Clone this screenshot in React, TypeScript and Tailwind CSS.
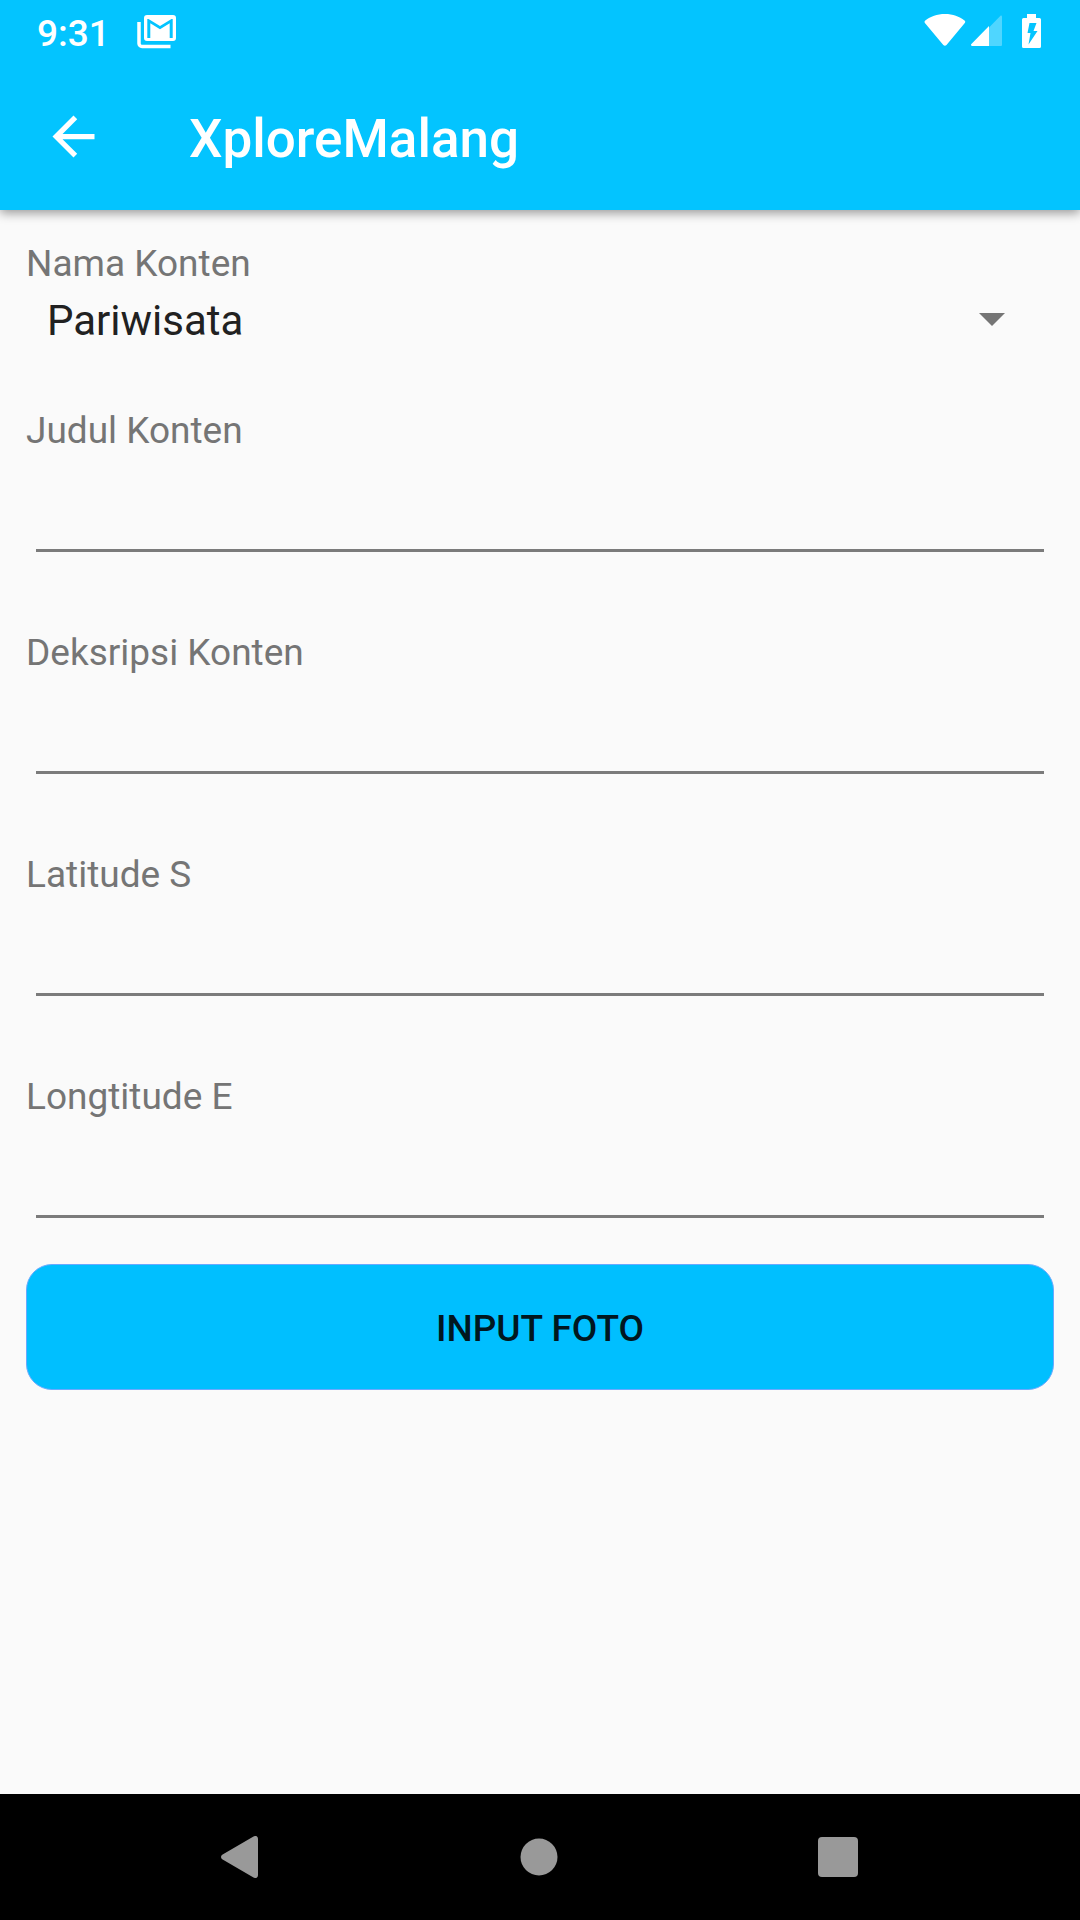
import { useState } from "react";

const fields = [
  { id: "judul", label: "Judul Konten" },
  { id: "deskripsi", label: "Deksripsi Konten" },
  { id: "latitude", label: "Latitude S" },
  { id: "longtitude", label: "Longtitude E" },
];

function MailStackIcon() {
  return (
    <svg width="40" height="34" viewBox="0 0 40 34" fill="none" aria-hidden="true">
      <path d="M2 7v21.500a3 3 0 0 0 3 3h28.500" stroke="white" strokeWidth="3.500" />
      <path
        fill="white"
        fillRule="evenodd"
        d="M10 0h26a3 3 0 0 1 3 3v20a3 3 0 0 1-3 3H10a3 3 0 0 1-3-3V3a3 3 0 0 1 3-3zM10.300 4V23h3V8.300L23 14.300l9.700-6V23h3V4h-1.200L23 11 11.500 4z"
      />
    </svg>
  );
}

function WifiIcon() {
  return (
    <svg width="42" height="34" viewBox="0 0 42 34" fill="white" aria-hidden="true">
      <path d="M21 0C13 0 6.500 2.600 1.300 6.500c-.9.700-1 1.600-.4 2.400L19.300 31c.9 1.100 2.300 1.100 3.200 0L40.800 8.900c.7-.8.600-1.700-.3-2.400C35.300 2.600 29 0 21 0z" />
    </svg>
  );
}

function SignalIcon() {
  return (
    <svg width="32" height="32" viewBox="0 0 32 32" fill="white" aria-hidden="true">
      <path fillOpacity="0.3" d="M18 12.500 29.500.8c.6-.6 1.500-.3 1.500.6V30a1 1 0 0 1-1 1H18z" />
      <path d="M18 11v20H1.200C0 31-.4 29.800.4 29z" />
    </svg>
  );
}

function BatteryIcon() {
  return (
    <svg width="20" height="34" viewBox="0 0 20 34" fill="white" aria-hidden="true">
      <path
        fillRule="evenodd"
        d="M5 0h9v4h3.500A1.500 1.500 0 0 1 19 5.500v27a1.500 1.500 0 0 1-1.500 1.500h-16A1.500 1.500 0 0 1 0 32.500v-27A1.500 1.500 0 0 1 1.500 4H5zM7.500 9 5.500 19h3L6.500 30.500 15.500 17h-4L14.500 9z"
      />
    </svg>
  );
}

function StatusBar() {
  return (
    <div className="flex h-[63px] items-start justify-between pr-[38px] pl-[37px] text-white">
      <div className="flex">
        <span className="mr-[27px] pt-3 text-[37px] leading-[43px] font-medium">9:31</span>
        <span className="pt-[15px]">
          <MailStackIcon />
        </span>
      </div>
      <div className="flex items-center pt-[14px]">
        <WifiIcon />
        <span className="mr-[19px] ml-[5px]">
          <SignalIcon />
        </span>
        <BatteryIcon />
      </div>
    </div>
  );
}

export default function App() {
  const [kind, setKind] = useState("Pariwisata");

  return (
    <div className="flex min-h-screen flex-col bg-[#fafafa] font-[Roboto,sans-serif]">
      <header className="bg-[#03c4ff] shadow-[0_3px_10px_rgba(0,0,0,0.4)]">
        <StatusBar />
        <div className="flex h-[147px] items-center gap-[84px] px-[42px] text-white">
          <button type="button" aria-label="Kembali">
            <svg width="63" height="63" viewBox="0 0 24 24" fill="currentColor" aria-hidden="true">
              <path d="M20 11H7.830l5.590-5.590L12 4l-8 8 8 8 1.410-1.410L7.830 13H20v-2z" />
            </svg>
          </button>
          <h1 className="pt-1 text-[53px] leading-[62px] font-medium">XploreMalang</h1>
        </div>
      </header>

      <main className="flex-1 px-[26px] pt-[29px]">
        <form className="flex flex-col" onSubmit={(e) => e.preventDefault()}>
          <label htmlFor="kind" className="text-[37px] leading-[49px] text-[#757575]">
            Nama Konten
          </label>
          <div className="relative mb-[55px]">
            <select
              id="kind"
              value={kind}
              onChange={(e) => setKind(e.target.value)}
              className="h-[63px] w-full appearance-none bg-transparent pt-[3px] pl-[21px] text-[42px] leading-[60px] text-[#212121] outline-none"
            >
              <option>Pariwisata</option>
              <option>Kuliner</option>
            </select>
            <svg
              className="pointer-events-none absolute top-[25px] right-[49px]"
              width="26"
              height="13"
              viewBox="0 0 26 13"
              fill="#757575"
              aria-hidden="true"
            >
              <path d="M0 0h26L13 13z" />
            </svg>
          </div>

          <div className="flex flex-col gap-[76px]">
            {fields.map((f) => (
              <div key={f.id} className="flex flex-col">
                <label htmlFor={f.id} className="text-[37px] leading-[49px] text-[#757575]">
                  {f.label}
                </label>
                <input
                  id={f.id}
                  type="text"
                  className="mx-[10px] h-[97px] border-b-3 border-[#7b7b7b] bg-transparent pt-5 text-[47px] text-[#212121] outline-none"
                />
              </div>
            ))}
          </div>

          <button
            type="submit"
            className="mt-[46px] h-[126px] rounded-[26px] border border-[#6aa9ff] bg-[#00bfff] pt-[3px] text-[37px] font-medium text-[#00171f]"
          >
            INPUT FOTO
          </button>
        </form>
      </main>

      <nav className="grid h-[126px] grid-cols-3 items-center justify-items-center bg-black pr-[92px] pl-[90px] text-[#999999]">
        <button type="button" aria-label="Back">
          <svg width="38" height="42" viewBox="0 0 38 42" fill="currentColor" aria-hidden="true">
            <path d="M1.200 18.800 32.500.5C34.800-.8 37 .3 37 3v36c0 2.700-2.200 3.800-4.500 2.500L1.200 23.200c-1.600-1-1.600-3.400 0-4.400z" />
          </svg>
        </button>
        <button type="button" aria-label="Home">
          <svg width="38" height="38" viewBox="0 0 38 38" fill="currentColor" aria-hidden="true">
            <circle cx="19" cy="19" r="18.500" />
          </svg>
        </button>
        <button type="button" aria-label="Recent apps">
          <svg width="40" height="40" viewBox="0 0 40 40" fill="currentColor" aria-hidden="true">
            <rect width="40" height="40" rx="4" />
          </svg>
        </button>
      </nav>
    </div>
  );
}
